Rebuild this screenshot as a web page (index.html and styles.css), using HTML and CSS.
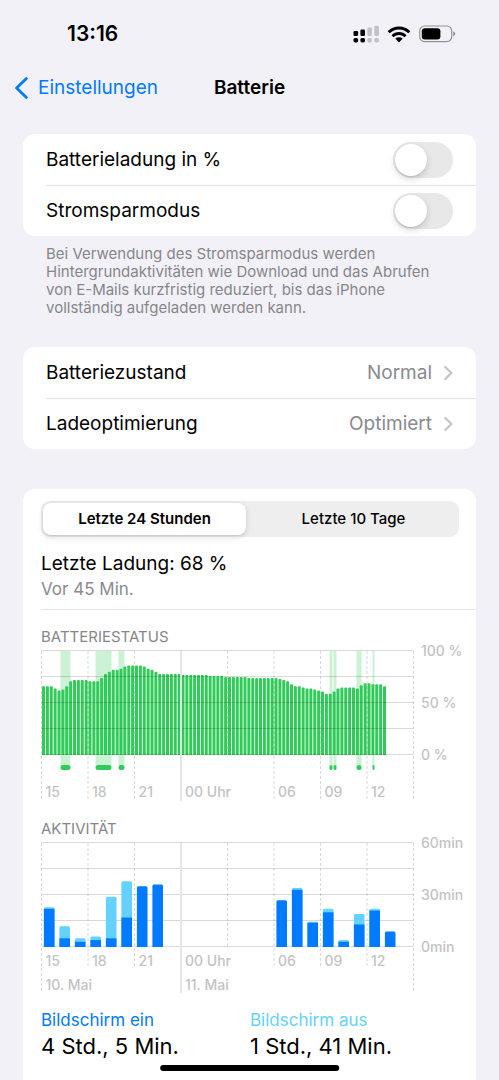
FILE: index.html
```html
<!DOCTYPE html>
<html lang="de">
<head>
<meta charset="utf-8">
<meta name="viewport" content="width=device-width, initial-scale=1">
<title>Batterie</title>
<link rel="stylesheet" href="styles.css">
</head>
<body>
<div class="status-bar">
  <span class="clock">13:16</span>
  <div class="status-icons">
    <svg width="26" height="18" viewBox="0 0 26 18" aria-hidden="true">
      <g fill="#000"><rect x="0.5" y="6" width="4.6" height="5" rx="1.3"/><rect x="7.4" y="4.5" width="4.6" height="6.5" rx="1.3"/><rect x="0.5" y="13" width="4.6" height="4.4" rx="1.6"/><rect x="7.4" y="13" width="4.6" height="4.4" rx="1.6"/></g>
      <g fill="#c2c1c6"><rect x="14.3" y="2.6" width="4.6" height="8.4" rx="1.3"/><rect x="21.3" y="0.8" width="4.6" height="10.2" rx="1.3"/><rect x="14.3" y="13" width="4.6" height="4.4" rx="1.6"/><rect x="21.3" y="13" width="4.6" height="4.4" rx="1.6"/></g>
    </svg>
    <svg width="24" height="17" viewBox="0 0 24 17" aria-hidden="true">
      <g fill="none" stroke="#000" stroke-width="2.9"><path d="M1.7 6.2A14.7 14.7 0 0 1 22.3 6.2"/><path d="M5.5 10.2A9.2 9.2 0 0 1 18.5 10.2"/></g>
      <path fill="#000" d="M8.3 12.6A5.4 5.4 0 0 1 15.7 12.6L12.5 15.9Q12 16.4 11.5 15.9Z"/>
    </svg>
    <svg width="37" height="18" viewBox="0 0 37 18" aria-hidden="true">
      <rect x="0.7" y="1" width="32" height="15.6" rx="4.8" fill="none" stroke="#939297" stroke-width="1.2"/>
      <rect x="2.8" y="3.2" width="18.6" height="11.2" rx="3" fill="#000"/>
      <path d="M34.2 6.3Q36.3 7 36.3 8.8T34.2 11.3Z" fill="#939297"/>
    </svg>
  </div>
</div>

<header class="nav">
  <a class="back" href="#">
    <svg width="14" height="22" viewBox="0 0 14 22" aria-hidden="true"><path d="M12.4 1.6L2.6 11L12.4 20.4" fill="none" stroke="#007aff" stroke-width="2.8" stroke-linecap="round" stroke-linejoin="round"/></svg>
    <span>Einstellungen</span>
  </a>
  <h1 class="title">Batterie</h1>
</header>

<main class="content">
  <section class="card">
    <label class="row" for="percent"><span>Batterieladung in %</span><input class="switch" type="checkbox" role="switch" id="percent"></label>
    <label class="row" for="saver"><span>Stromsparmodus</span><input class="switch" type="checkbox" role="switch" id="saver"></label>
  </section>
  <p class="hint">Bei Verwendung des Stromsparmodus werden Hintergrundaktivitäten wie Download und das Abrufen von E-Mails kurzfristig reduziert, bis das iPhone vollständig aufgeladen werden kann.</p>

  <section class="card links">
    <a class="row" href="#"><span>Batteriezustand</span><span class="value">Normal<svg width="9" height="16" viewBox="0 0 9 16" aria-hidden="true"><path d="M1.2 2L7.4 8L1.2 14" fill="none" stroke="#c4c4c7" stroke-width="2.2" stroke-linecap="round" stroke-linejoin="round"/></svg></span></a>
    <a class="row" href="#"><span>Ladeoptimierung</span><span class="value">Optimiert<svg width="9" height="16" viewBox="0 0 9 16" aria-hidden="true"><path d="M1.2 2L7.4 8L1.2 14" fill="none" stroke="#c4c4c7" stroke-width="2.2" stroke-linecap="round" stroke-linejoin="round"/></svg></span></a>
  </section>

  <section class="card usage">
    <div class="segmented">
      <button class="segment selected" type="button" aria-pressed="true">Letzte 24 Stunden</button>
      <button class="segment" type="button" aria-pressed="false">Letzte 10 Tage</button>
    </div>
    <div class="last-charge">
      <p>Letzte Ladung: 68 %</p>
      <p class="ago">Vor 45 Min.</p>
    </div>
    <h2 class="chart-title">BATTERIESTATUS</h2>
    <svg class="chart" id="level" viewBox="0 0 435 152" role="img" aria-label="Batteriestatus"></svg>
    <h2 class="chart-title">AKTIVITÄT</h2>
    <svg class="chart" id="activity" viewBox="0 0 435 152" role="img" aria-label="Aktivität"></svg>
    <dl class="totals">
      <div><dt class="on">Bildschirm ein</dt><dd>4 Std., 5 Min.</dd></div>
      <div><dt class="off">Bildschirm aus</dt><dd>1 Std., 41 Min.</dd></div>
    </dl>
  </section>
</main>
<div class="home-indicator"></div>
<script src="charts.js"></script>
</body>
</html>
```
FILE: styles.css
```css
* { box-sizing: border-box; }
body {
  margin: 0;
  min-height: 100vh;
  display: flex;
  flex-direction: column;
  overflow-x: hidden;
  background: #f2f1f7;
  color: #000;
  font-family: Inter, "Liberation Sans", sans-serif;
  font-size: 19px;
  line-height: 24px;
}
h1, h2, p, dl, dd { margin: 0; font-weight: 400; }
a { color: inherit; text-decoration: none; }
svg { display: block; flex: none; }

.status-bar {
  display: flex;
  justify-content: space-between;
  align-items: center;
  height: 68px;
  padding: 0 43px 0 67px;
}
.clock { font-size: 21px; font-weight: 600; }
.status-icons { display: flex; align-items: center; gap: 8px; }

.nav {
  display: grid;
  grid-template-columns: 1fr auto 1fr;
  align-items: center;
  height: 40px;
  padding: 0 14px;
}
.back { display: flex; align-items: center; gap: 10px; color: #007aff; }
.title { font-size: 19px; font-weight: 600; }

.content { flex: 1; display: flex; flex-direction: column; padding: 26px 23px 0; }
.card { background: #fff; border-radius: 12px; }
.row {
  display: flex;
  align-items: center;
  justify-content: space-between;
  height: 51px;
  margin-left: 23px;
  padding-right: 23px;
}
.row + .row { border-top: 1px solid #e2e2e5; }
.switch {
  appearance: none;
  display: flex;
  align-items: center;
  width: 60px;
  height: 36px;
  margin: 0;
  padding: 2px;
  border-radius: 18px;
  background: #e8e8e9;
}
.switch::before {
  content: "";
  width: 32px;
  height: 32px;
  border-radius: 50%;
  background: #fff;
  box-shadow: 0 3px 7px rgba(0, 0, 0, .16), 0 1px 1px rgba(0, 0, 0, .08);
}
.switch:checked { justify-content: flex-end; background: #34c759; }
.hint {
  margin: 9px 43px 30px 23px;
  font-size: 15px;
  line-height: 18px;
  color: #86868b;
}
.links { margin-bottom: 40px; }
.value { display: flex; align-items: center; gap: 12px; color: #8a8a8e; }

.usage { flex: 1; padding: 12px 0 20px 18px; border-radius: 12px 12px 0 0; }
.segmented {
  display: grid;
  grid-template-columns: 1fr 1fr;
  height: 36px;
  margin-right: 17px;
  padding: 2px;
  border-radius: 9px;
  background: #eeeeef;
}
.segment {
  border: 0;
  padding: 0;
  border-radius: 8px;
  background: none;
  color: #000;
  font: 500 15px/20px Inter, "Liberation Sans", sans-serif;
}
.segment.selected { margin-right: 4px; background: #fff; font-weight: 600; box-shadow: 0 2px 6px rgba(0, 0, 0, .14), 0 1px 1px rgba(0, 0, 0, .06); }
.last-charge { padding: 15px 0 7px; border-bottom: 1px solid #e6e6e8; }
.ago { font-size: 17px; color: #8a8a8e; line-height: 26px; }
.chart-title { margin-top: 17px; font-size: 15px; line-height: 20px; color: #86868b; }
.chart { width: 100%; margin-top: 3px; overflow: visible; }
.chart text { font-size: 14px; font-weight: 500; fill: #c3c3c6; }
.grid-line { stroke: #000; stroke-opacity: .15; }
.dashed { stroke-dasharray: 3 2; }
.midnight { stroke: #e6e6e8; stroke-width: 2; }
.bar { fill: #30cb58; }
.charging { fill: #30cb58; fill-opacity: .25; }
.screen-on { fill: #007aff; }
.screen-off { fill: #64d2ff; }

.totals { display: grid; grid-template-columns: 1fr 1fr; margin: 14px 17px 0 0; }
.totals dt { font-size: 17px; line-height: 24px; }
.totals dd { font-size: 22px; line-height: 28px; }
.on { color: #007aff; }
.off { color: #64d2ff; }

.home-indicator {
  position: fixed;
  bottom: 9px;
  left: 50%;
  width: 36%;
  height: 6px;
  border-radius: 3px;
  background: #000;
  transform: translateX(-50%);
}
```
FILE: charts.js
```js
const NS = "http://www.w3.org/2000/svg";
const PLOT = { left: 0.5, width: 372, top: 1, height: 104 };
const base = PLOT.top + PLOT.height;

function add(parent, tag, attrs, text) {
  const el = document.createElementNS(NS, tag);
  for (const key in attrs) el.setAttribute(key, attrs[key]);
  if (text) el.textContent = text;
  parent.appendChild(el);
}

function drawGrid(svg, tickEnd, edgeEnd) {
  for (let i = 0; i <= 4; i++) {
    const y = PLOT.top + i * PLOT.height / 4 - 0.5;
    add(svg, "line", { class: "grid-line", x1: PLOT.left, x2: PLOT.left + PLOT.width, y1: y, y2: y });
  }
  for (let i = 0; i <= 8; i++) {
    const x = PLOT.left + i * PLOT.width / 8;
    if (i === 3) {
      add(svg, "line", { class: "midnight", x1: x, x2: x, y1: PLOT.top, y2: 151 });
      continue;
    }
    let end = i === 0 || i === 8 ? edgeEnd : tickEnd;
    if (i === 4) end = base;
    add(svg, "line", { class: "grid-line dashed", x1: x, x2: x, y1: PLOT.top, y2: end });
  }
}

function drawLabels(svg, hoursY, scale) {
  const hours = ["15", "18", "21", "00 Uhr", "", "06", "09", "12"];
  hours.forEach((h, i) => {
    if (h) add(svg, "text", { x: PLOT.left + i * PLOT.width / 8 + 4, y: hoursY }, h);
  });
  scale.forEach((s, i) => add(svg, "text", { x: 380, y: 6 + i * PLOT.height / 2 }, s));
}

// Battery level in percent, one value per quarter hour.
const levels = [
  66, 66, 66, 64, 62, 63, 66, 71, 72, 72, 72, 72, 71, 71, 71, 74, 78, 80, 82, 82,
  83, 85, 86, 86, 86, 86, 85, 83, 82, 80, 78, 78, 78, 78, 78, 78, 77, 77, 77, 77,
  77, 77, 77, 76, 76, 76, 76, 75, 75, 75, 75, 75, 75, 74, 74, 74, 74, 74, 74, 74,
  74, 73, 72, 71, 68, 66, 66, 65, 64, 64, 63, 62, 61, 59, 59, 61, 64, 65, 65, 65,
  65, 64, 67, 69, 69, 68, 68, 68, 66
];
const charging = [[19, 10], [54, 16], [77, 6], [288, 3], [292, 3], [315, 5], [331, 2]];

const level = document.getElementById("level");
charging.forEach(([x, w]) => {
  add(level, "rect", { class: "charging", x: PLOT.left + x, y: PLOT.top, width: w, height: 115 });
  add(level, "rect", { class: "bar", x: PLOT.left + x, y: 115, width: w, height: 5, rx: Math.min(2.5, w / 2) });
});
levels.forEach((v, i) => {
  const h = v / 100 * PLOT.height;
  add(level, "path", { class: "bar", d: `M${PLOT.left + 0.5 + i * 3.875} ${base}v${1 - h}q0 -1 1 -1h1q1 0 1 1v${h - 1}z` });
});
drawGrid(level, 149, 149);
drawLabels(level, 147, ["100 %", "50 %", "0 %"]);

// Minutes per hour slot: [slot, total, screen on].
const usage = [
  [0, 23, 22], [1, 12, 5], [2, 5, 3], [3, 6, 4], [4, 29, 5], [5, 38, 17], [6, 35, 35], [7, 36, 36],
  [15, 27, 27], [16, 34, 33], [17, 14.6, 14], [18, 22, 20], [19, 4, 3], [20, 19, 13], [21, 22, 21], [22, 9, 9]
];
const activity = document.getElementById("activity");
drawGrid(activity, 126, 149);
usage.forEach(([slot, total, on]) => {
  const x = PLOT.left + 2.4 + slot * 15.5;
  const t = total / 60 * PLOT.height;
  const o = on / 60 * PLOT.height;
  const top = total === on ? "screen-on" : "screen-off";
  add(activity, "path", { class: top, d: `M${x} ${base}v${1.5 - t}q0 -1.5 1.5 -1.5h7.6q1.5 0 1.5 1.5v${t - 1.5}z` });
  if (total !== on) {
    add(activity, "rect", { class: "screen-on", x, y: base - o, width: 10.6, height: o });
  }
});
drawLabels(activity, 124, ["60min", "30min", "0min"]);
add(activity, "text", { x: 4.5, y: 148 }, "10. Mai");
add(activity, "text", { x: 144, y: 148 }, "11. Mai");
```
